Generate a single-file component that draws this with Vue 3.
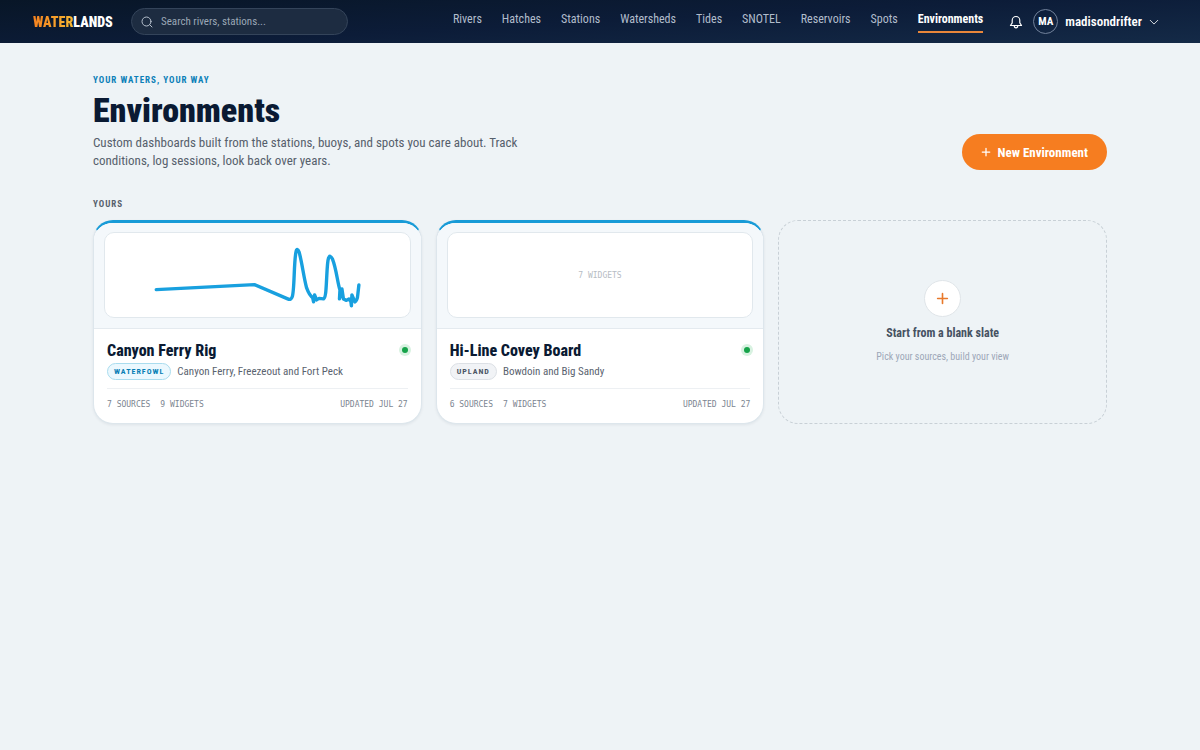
<script setup>
const links = ['Rivers', 'Hatches', 'Stations', 'Watersheds', 'Tides', 'SNOTEL', 'Reservoirs', 'Spots', 'Environments']
const activeLink = 'Environments'

const boards = [
  {
    name: 'Canyon Ferry Rig',
    tag: 'Waterfowl',
    tone: 'water',
    places: 'Canyon Ferry, Freezeout and Fort Peck',
    sources: 7,
    widgets: 9,
    updated: 'Jul 27',
    chart: true
  },
  {
    name: 'Hi-Line Covey Board',
    tag: 'Upland',
    tone: 'land',
    places: 'Bowdoin and Big Sandy',
    sources: 6,
    widgets: 7,
    updated: 'Jul 27',
    chart: false
  }
]
</script>

<template>
  <div class="page">
    <header class="topbar">
      <a class="logo" href="#"><span class="logo-water">WATER</span><span>LANDS</span></a>
      <label class="search">
        <svg class="search-icon" viewBox="0 0 24 24" aria-hidden="true">
          <circle cx="11" cy="11" r="9" />
          <path d="M22 22l-4.600-4.600" />
        </svg>
        <input type="search" placeholder="Search rivers, stations..." aria-label="Search rivers, stations" />
      </label>
      <nav class="nav">
        <a v-for="link in links" :key="link" href="#" :class="{ active: link === activeLink }">{{ link }}</a>
      </nav>
      <div class="account">
        <button class="bell" type="button" aria-label="Notifications">
          <svg viewBox="0 0 24 24" aria-hidden="true">
            <path d="M12 2.500a6.500 6.500 0 0 0-6.500 6.500v4.500L2.500 18h19l-3-4.500V9A6.500 6.500 0 0 0 12 2.500z" />
            <path d="M9 18.500a3 3.500 0 0 0 6 0" />
          </svg>
        </button>
        <button class="user" type="button">
          <span class="avatar">MA</span>
          <span>madisondrifter</span>
          <svg viewBox="0 0 24 24" aria-hidden="true"><path d="M3 8l9 9 9-9" /></svg>
        </button>
      </div>
    </header>

    <main class="content">
      <section class="intro">
        <div class="intro-text">
          <p class="eyebrow">Your waters, your way</p>
          <h1>Environments</h1>
          <p class="lead">Custom dashboards built from the stations, buoys, and spots you care about. Track conditions, log sessions, look back over years.</p>
        </div>
        <button class="new-button" type="button">
          <svg viewBox="0 0 24 24" aria-hidden="true"><path d="M12 3v18M3 12h18" /></svg>
          New Environment
        </button>
      </section>

      <h2 class="section-label">Yours</h2>
      <div class="grid">
        <article v-for="board in boards" :key="board.name" class="card">
          <div class="preview">
            <div class="preview-frame">
              <svg v-if="board.chart" class="spark" viewBox="105 233 306 84" aria-hidden="true">
                <path d="M156.500 289.700L255 284.700L288.500 299Q292 300.500 293 297C295.500 291 294.500 261 297 251Q298 247.500 300 252C303 263 304.500 277 307.500 288Q310.500 296 313.500 297.500L314.500 302L315.500 295L317.500 300L320 298.500L324.500 299Q326.500 298 327 289C328 275 328 262 329.500 258Q331 254 333.500 259C337.500 269 338.500 283 341 290L340.500 299L343 289L344.500 299L347.500 300.500L350 299L352 302L352.500 306L353 295L356 302Q358.500 301 359 294L360 285" />
              </svg>
              <span v-else>{{ board.widgets }} widgets</span>
            </div>
          </div>
          <div class="card-body">
            <div class="card-title">
              <h3>{{ board.name }}</h3>
              <span class="status" role="img" aria-label="Live"></span>
            </div>
            <div class="card-meta">
              <span class="tag" :class="board.tone">{{ board.tag }}</span>
              <span class="places">{{ board.places }}</span>
            </div>
            <footer class="card-foot">
              <span>{{ board.sources }} sources</span>
              <span>{{ board.widgets }} widgets</span>
              <span class="updated">Updated {{ board.updated }}</span>
            </footer>
          </div>
        </article>

        <button class="blank" type="button">
          <span class="blank-icon">
            <svg viewBox="0 0 24 24" aria-hidden="true"><path d="M12 3v18M3 12h18" /></svg>
          </span>
          <span class="blank-title">Start from a blank slate</span>
          <span class="blank-hint">Pick your sources, build your view</span>
        </button>
      </div>
    </main>
  </div>
</template>

<style>
body {
  background: #eef3f6;
}
</style>

<style scoped>
.page {
  min-height: 100vh;
  color: #0a1a33;
  font-family: "Roboto Condensed", "Liberation Sans Narrow", Roboto, sans-serif;
  font-size: 12px;
}

button {
  font: inherit;
  cursor: pointer;
}

svg {
  fill: none;
  stroke: currentColor;
  stroke-width: 2;
  stroke-linecap: round;
  stroke-linejoin: round;
}

h1,
h2,
h3,
p {
  margin: 0;
}

.topbar {
  display: flex;
  align-items: center;
  box-sizing: border-box;
  height: 43px;
  padding: 0 41px 0 33px;
  background: linear-gradient(177deg, #081627 0%, #0c1c38 50%, #142a47 100%);
  color: #fff;
}

.logo {
  width: 98px;
  color: #fff;
  font-size: 14px;
  font-weight: 900;
  text-decoration: none;
}

.logo-water {
  background: linear-gradient(90deg, #f5821f, #f7b733);
  background-clip: text;
  color: transparent;
}

.search {
  display: flex;
  align-items: center;
  box-sizing: border-box;
  width: 217px;
  height: 27px;
  padding: 0 9px;
  gap: 8px;
  border: 1px solid #34445a;
  border-radius: 14px;
  background: #1d2c41;
  color: #b6c0cd;
}

.search-icon {
  flex: none;
  width: 12px;
  height: 12px;
}

.search input {
  min-width: 0;
  flex: 1;
  padding: 0;
  border: 0;
  outline: 0;
  background: transparent;
  color: #fff;
  font: inherit;
  font-size: 11px;
}

.search input::placeholder {
  color: #9ba7b6;
}

.nav {
  display: flex;
  gap: 20px;
  margin-left: auto;
}

.nav a {
  padding-bottom: 4px;
  border-bottom: 2px solid transparent;
  color: #b2bdcc;
  line-height: 16px;
  text-decoration: none;
}

.nav a.active {
  border-bottom-color: #e8863a;
  color: #fff;
  font-weight: 700;
}

.account {
  display: flex;
  align-items: center;
  gap: 10px;
  margin-left: 26px;
}

.bell,
.user {
  display: flex;
  align-items: center;
  padding: 0;
  border: 0;
  background: none;
  color: #fff;
}

.bell svg {
  width: 14px;
  height: 14px;
}

.user {
  gap: 7px;
  font-size: 13px;
  font-weight: 600;
}

.user svg {
  width: 10px;
  height: 10px;
}

.avatar {
  display: grid;
  place-items: center;
  box-sizing: border-box;
  width: 25px;
  height: 25px;
  border: 1px solid #71819a;
  border-radius: 50%;
  font-size: 11px;
  font-weight: 700;
}

.content {
  max-width: 1014px;
  margin: 0 auto;
  padding: 31px 32px;
}

.intro {
  display: flex;
  align-items: flex-end;
  justify-content: space-between;
  gap: 24px;
}

.intro-text {
  max-width: 436px;
}

.eyebrow {
  color: #0b7fb8;
  font-size: 9px;
  font-weight: 700;
  letter-spacing: 1px;
  line-height: 13px;
  text-transform: uppercase;
}

h1 {
  margin-top: 3px;
  font-size: 34px;
  font-weight: 900;
  line-height: 40px;
}

.lead {
  margin-top: 4px;
  color: #56606c;
  font-size: 13px;
  line-height: 18px;
}

.new-button {
  display: flex;
  align-items: center;
  flex: none;
  height: 36px;
  padding: 0 19px;
  gap: 7px;
  border: 0;
  border-radius: 18px;
  background: #f67d20;
  color: #fff;
  font-size: 13px;
  font-weight: 700;
}

.new-button svg {
  width: 10px;
  height: 10px;
  stroke-width: 3;
}

.section-label {
  margin: 27px 0 8px;
  color: #56606c;
  font-size: 9px;
  font-weight: 700;
  letter-spacing: 1px;
  line-height: 15px;
  text-transform: uppercase;
}

.grid {
  display: grid;
  grid-template-columns: repeat(3, 1fr);
  gap: 14px;
}

.card {
  overflow: hidden;
  border: 1px solid #dde6ec;
  border-top: 3px solid #189bd7;
  border-radius: 20px;
  background: #fff;
  box-shadow: 0 1px 3px #0a1a3312;
}

.preview {
  padding: 9px 10px 10px;
  border-bottom: 1px solid #e4eaef;
  background: #f4f8fb;
}

.preview-frame {
  display: grid;
  place-items: center;
  height: 84px;
  border: 1px solid #e1e8ed;
  border-radius: 10px;
  background: #fff;
  color: #b6bcc4;
  font-family: "DejaVu Sans Mono", monospace;
  font-size: 8px;
  text-transform: uppercase;
}

.spark {
  width: 100%;
  height: 84px;
  color: #18a0df;
  stroke-width: 3.4;
}

.card-body {
  padding: 11px 13px;
}

.card-title {
  display: flex;
  justify-content: space-between;
  margin-bottom: 1px;
}

h3 {
  font-size: 16px;
  font-weight: 800;
  line-height: 22px;
}

.status {
  width: 6px;
  height: 6px;
  margin-top: 7px;
  border-radius: 50%;
  background: #16a34a;
  box-shadow: 0 0 0 3px #d8f2e1;
}

.card-meta {
  display: flex;
  align-items: center;
  gap: 6px;
}

.tag {
  padding: 0 6px;
  border: 1px solid #dce0e5;
  border-radius: 9px;
  background: #f1f3f6;
  color: #4a5564;
  font-size: 8px;
  font-weight: 700;
  letter-spacing: 1px;
  line-height: 15px;
  text-transform: uppercase;
}

.tag.water {
  border-color: #a9dcee;
  background: #ebf8fe;
  color: #087fb5;
}

.places {
  color: #5a636f;
  font-size: 11px;
}

.card-foot {
  display: flex;
  gap: 10px;
  margin-top: 8px;
  padding-top: 9px;
  border-top: 1px solid #edf0f3;
  color: #7c8591;
  font-family: "DejaVu Sans Mono", monospace;
  font-size: 8px;
  line-height: 14px;
  text-transform: uppercase;
}

.updated {
  margin-left: auto;
}

.blank {
  display: flex;
  flex-direction: column;
  align-items: center;
  justify-content: center;
  padding: 0;
  border: 1px dashed #c8d0d6;
  border-radius: 20px;
  background: transparent;
}

.blank-icon {
  display: grid;
  place-items: center;
  width: 35px;
  height: 35px;
  border: 1px solid #e0e5e9;
  border-radius: 50%;
  background: #fff;
  color: #e8792b;
}

.blank-icon svg {
  width: 13px;
  height: 13px;
  stroke-width: 3;
}

.blank-title {
  margin-top: 8px;
  color: #465262;
  font-size: 12px;
  font-weight: 700;
  line-height: 16px;
}

.blank-hint {
  margin-top: 8px;
  color: #9da7b8;
  font-size: 10px;
  line-height: 16px;
}
</style>
